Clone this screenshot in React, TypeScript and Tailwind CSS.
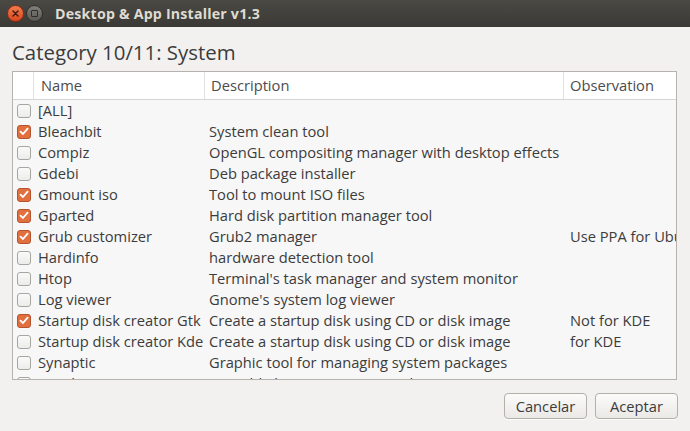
import React from 'react';

type Row = { name: string; desc: string; obs?: string; checked?: boolean };

const rows: Row[] = [
  { name: '[ALL]', desc: '' },
  { name: 'Bleachbit', desc: 'System clean tool', checked: true },
  { name: 'Compiz', desc: 'OpenGL compositing manager with desktop effects' },
  { name: 'Gdebi', desc: 'Deb package installer' },
  { name: 'Gmount iso', desc: 'Tool to mount ISO files', checked: true },
  { name: 'Gparted', desc: 'Hard disk partition manager tool', checked: true },
  { name: 'Grub customizer', desc: 'Grub2 manager', obs: 'Use PPA for Ubuntu', checked: true },
  { name: 'Hardinfo', desc: 'hardware detection tool' },
  { name: 'Htop', desc: "Terminal's task manager and system monitor" },
  { name: 'Log viewer', desc: "Gnome's system log viewer" },
  { name: 'Startup disk creator Gtk', desc: 'Create a startup disk using CD or disk image', obs: 'Not for KDE', checked: true },
  { name: 'Startup disk creator Kde', desc: 'Create a startup disk using CD or disk image', obs: 'for KDE' },
  { name: 'Synaptic', desc: 'Graphic tool for managing system packages' },
  { name: 'Unetbootin', desc: 'Bootable live USB creator tool' },
];

function Check({ on }: { on?: boolean }) {
  if (on) {
    return (
      <span className="flex h-[14px] w-[14px] items-center justify-center rounded-[3px] border border-[#b5542e] bg-[#e2703f]">
        <svg width="10" height="9" viewBox="0 0 10 9">
          <path d="M1.5 4.6 L4 7 L8.6 1.6" fill="none" stroke="#fff" strokeWidth="1.8" strokeLinecap="round" strokeLinejoin="round" />
        </svg>
      </span>
    );
  }
  return <span className="block h-[14px] w-[14px] rounded-[3px] border border-[#a8a5a0] bg-gradient-to-b from-[#fafafa] to-[#ececeb]" />;
}

export default function App() {
  return (
    <div
      className="flex h-[431px] w-[690px] flex-col bg-[#f2f1f0] text-[#3c3c3c]"
      style={{ fontFamily: '"Open Sans", "Liberation Sans", sans-serif' }}
    >
      <div className="flex h-[27px] items-center bg-gradient-to-b from-[#4a4944] to-[#3a3935] pl-[7px]">
        <span className="flex h-[17px] w-[17px] items-center justify-center rounded-full border border-[#8a2d10] bg-gradient-to-b from-[#f37a4f] to-[#d9461c]">
          <svg width="7" height="7" viewBox="0 0 7 7">
            <path d="M1 1 L6 6 M6 1 L1 6" stroke="#3a1a10" strokeWidth="1.4" strokeLinecap="round" />
          </svg>
        </span>
        <span className="ml-[2px] flex h-[17px] w-[17px] items-center justify-center rounded-full border border-[#2e2d2a] bg-gradient-to-b from-[#807e78] to-[#5c5a55]">
          <span className="block h-[7px] w-[7px] rounded-[1px] border border-[#2e2d2a]" />
        </span>
        <span className="ml-[12px] text-[14.2px] font-bold tracking-[0.2px] text-[#dfdbd2]">Desktop &amp; App Installer v1.3</span>
      </div>

      <div className="flex flex-1 flex-col px-[12px]">
        <div className="mt-[11px] text-[20.4px] leading-[28px] text-[#3c3c3c]">Category 10/11: System</div>

        <div className="mt-[5px] mr-[1px] h-[309px] overflow-hidden border border-[#b6b3ae] bg-[#f7f7f7]">
          <div className="flex h-[28px] items-center border-b border-[#d7d5d2] bg-white text-[14.7px] text-[#4c4c4c]">
            <div className="h-full w-[21px] border-r border-[#e4e2df]" />
            <div className="flex h-full w-[171px] items-center border-r border-[#e4e2df] pl-[7px]">Name</div>
            <div className="flex h-full w-[359px] items-center border-r border-[#e4e2df] pl-[6px]">Description</div>
            <div className="flex h-full flex-1 items-center pl-[6px]">Observation</div>
          </div>
          {rows.map((r) => (
            <div key={r.name} className="flex h-[21px] items-center whitespace-nowrap text-[14.7px] text-[#3c3c3c]">
              <div className="flex w-[21px] justify-center pl-[1px]">
                <Check on={r.checked} />
              </div>
              <div className="w-[171px] pl-[4px]">{r.name}</div>
              <div className="w-[359px] pl-[4px]">{r.desc}</div>
              <div className="flex-1 overflow-hidden pl-[6px]">{r.obs}</div>
            </div>
          ))}
        </div>

        <div className="mt-[13px] flex justify-end gap-[8px]">
          {['Cancelar', 'Aceptar'].map((b) => (
            <button
              key={b}
              className="h-[26px] w-[83px] rounded-[4px] border border-[#b3afa9] bg-gradient-to-b from-[#fbfbfa] to-[#ebe9e6] text-[14.7px] text-[#3c3c3c] shadow-[0_1px_0_rgba(255,255,255,0.8)]"
            >
              {b}
            </button>
          ))}
        </div>
      </div>
    </div>
  );
}
